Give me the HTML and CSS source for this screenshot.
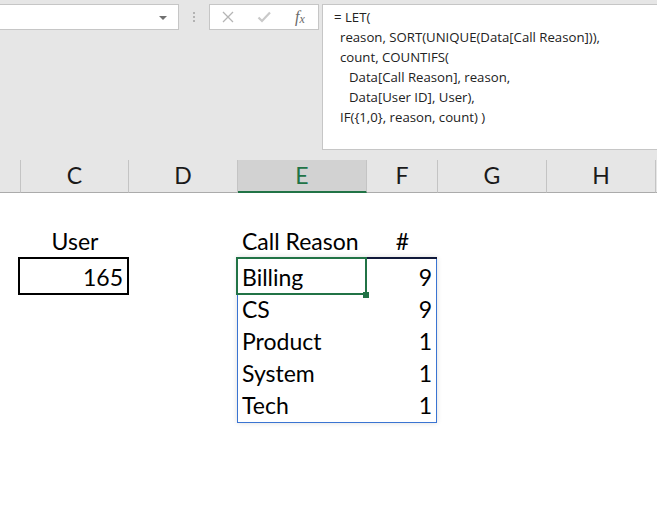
FILE: index.html
```html
<!DOCTYPE html>
<html>
<head>
<meta charset="utf-8">
<link rel="stylesheet" href="styles.css">
</head>
<body>
<div class="app">
  <div class="toolbar">
    <div class="namebox"><span class="caret"></span></div>
    <div class="grip"><i></i><i></i><i></i></div>
    <div class="fxbox">
      <span class="btn"><svg width="12" height="12" viewBox="0 0 12 12"><path d="M1 1 L11 11 M11 1 L1 11" stroke="#b5b5b5" stroke-width="1.3" fill="none"/></svg></span>
      <span class="btn"><svg width="14" height="12" viewBox="0 0 14 12"><path d="M1.5 6.5 L5 10 L13 1.5" stroke="#c9c9c9" stroke-width="2.2" fill="none"/></svg></span>
      <span class="btn fx"><span class="f">f</span><span class="x">x</span></span>
    </div>
    <div class="formula">
      <div class="ln">= LET(</div>
      <div class="ln i1">reason, SORT(UNIQUE(Data[Call Reason])),</div>
      <div class="ln i1">count, COUNTIFS(</div>
      <div class="ln i2">Data[Call Reason], reason,</div>
      <div class="ln i2">Data[User ID], User),</div>
      <div class="ln i1">IF({1,0}, reason, count) )</div>
    </div>
  </div>
  <div class="colheads">
    <div class="ch"></div>
    <div class="ch">C</div>
    <div class="ch">D</div>
    <div class="ch active">E</div>
    <div class="ch">F</div>
    <div class="ch">G</div>
    <div class="ch">H</div>
    <div class="ch rest"></div>
  </div>
  <div class="sheet">
    <div class="lbl lbl-user">User</div>
    <div class="lbl lbl-reason">Call Reason</div>
    <div class="lbl lbl-hash">#</div>
    <div class="userbox">165</div>
    <div class="spill">
      <div class="topline"></div>
      <div class="sel"><span class="handle"></span></div>
      <div class="row"><span>Billing</span><span>9</span></div>
      <div class="row"><span>CS</span><span>9</span></div>
      <div class="row"><span>Product</span><span>1</span></div>
      <div class="row"><span>System</span><span>1</span></div>
      <div class="row"><span>Tech</span><span>1</span></div>
    </div>
  </div>
</div>
</body>
</html>
```
FILE: styles.css
```css
html, body {
  margin: 0;
  padding: 0;
  background: #ffffff;
  overflow: hidden;
}
.app {
  width: 657px;
  height: 517px;
  overflow: hidden;
  font-family: "Lato", "Open Sans", sans-serif;
  color: #000;
}
.toolbar {
  height: 160px;
  box-sizing: border-box;
  padding-top: 4px;
  background: #e6e6e6;
  display: flex;
  align-items: flex-start;
}
.namebox {
  width: 181px;
  height: 26px;
  margin-left: -2px;
  box-sizing: border-box;
  background: #fff;
  border: 1px solid #c6c6c6;
  display: flex;
  align-items: center;
  justify-content: flex-end;
  padding-right: 11px;
  flex-shrink: 0;
}
.caret {
  width: 0;
  height: 0;
  border-left: 4px solid transparent;
  border-right: 4px solid transparent;
  border-top: 4px solid #707070;
  margin-top: 1px;
}
.grip {
  width: 30px;
  height: 26px;
  display: flex;
  flex-direction: column;
  align-items: center;
  justify-content: center;
  gap: 2px;
  flex-shrink: 0;
}
.grip i {
  display: block;
  width: 2px;
  height: 2px;
  background: #b3b3b3;
}
.fxbox {
  width: 110px;
  height: 26px;
  box-sizing: border-box;
  background: #fff;
  border: 1px solid #c6c6c6;
  display: flex;
  flex-shrink: 0;
}
.btn {
  width: 36px;
  height: 24px;
  display: flex;
  align-items: center;
  justify-content: center;
}
.fx {
  font-family: "Liberation Serif", serif;
  font-style: italic;
  color: #6a6a6a;
}
.fx .f {
  font-size: 16px;
}
.fx .x {
  font-size: 12px;
  margin-top: 4px;
}
.formula {
  flex: 1;
  margin-left: 3px;
  margin-right: -4px;
  height: 146px;
  box-sizing: border-box;
  background: #fff;
  border: 1px solid #c6c6c6;
  padding: 2px 0 0 11px;
  font-family: "Open Sans", sans-serif;
  font-size: 13.2px;
  line-height: 20px;
  color: #222;
  white-space: nowrap;
}
.ln.i1 {
  padding-left: 6px;
}
.ln.i2 {
  padding-left: 15px;
}
.colheads {
  display: grid;
  grid-template-columns: 21px 108px 109px 129px 71px 109px 109px 1fr;
  height: 33px;
  background: #e6e6e6;
}
.ch {
  box-sizing: border-box;
  height: 33px;
  border-right: 1px solid #c4c4c4;
  border-bottom: 1px solid #ababab;
  text-align: center;
  font-size: 23px;
  line-height: 31px;
  color: #1a1a1a;
}
.ch.rest {
  border-right: none;
}
.ch.active {
  background: #d2d2d2;
  color: #217346;
  border-bottom: 2px solid #217346;
}
.sheet {
  display: grid;
  grid-template-columns: 21px 108px 109px 129px 71px 109px 109px 1fr;
  grid-template-rows: 64px 170px;
  font-size: 23px;
}
.lbl {
  align-self: end;
  line-height: 32px;
  white-space: nowrap;
  margin-bottom: 0;
}
.lbl-user {
  grid-column: 2;
  grid-row: 1;
  text-align: center;
}
.lbl-reason {
  grid-column: 4;
  grid-row: 1;
  padding-left: 4px;
}
.lbl-hash {
  grid-column: 5;
  grid-row: 1;
  text-align: center;
}
.userbox {
  grid-column: 2;
  grid-row: 2;
  align-self: start;
  justify-self: start;
  margin-left: -3px;
  width: 111px;
  height: 38px;
  box-sizing: border-box;
  border: 2px solid #000;
  text-align: right;
  padding: 2px 4px 0 0;
  line-height: 32px;
}
.spill {
  grid-column: 4 / span 2;
  grid-row: 2;
  align-self: start;
  justify-self: start;
  margin-left: -1px;
  width: 200px;
  height: 166px;
  box-sizing: border-box;
  border: 1px solid #3a74d2;
  box-shadow: 0 0 5px rgba(0, 0, 0, 0.14);
  padding-top: 3px;
  position: relative;
  background: #fff;
}
.row {
  height: 32px;
  line-height: 32px;
  display: flex;
  justify-content: space-between;
  padding: 0 4px 0 4px;
}
.topline {
  position: absolute;
  top: -1px;
  left: 128px;
  width: 71px;
  height: 2px;
  background: #10193a;
}
.sel {
  position: absolute;
  top: -1px;
  left: -2px;
  width: 131px;
  height: 38px;
  box-sizing: border-box;
  border: 2px solid #217346;
}
.handle {
  position: absolute;
  left: 125px;
  top: 33px;
  width: 6px;
  height: 6px;
  background: #217346;
}
```
